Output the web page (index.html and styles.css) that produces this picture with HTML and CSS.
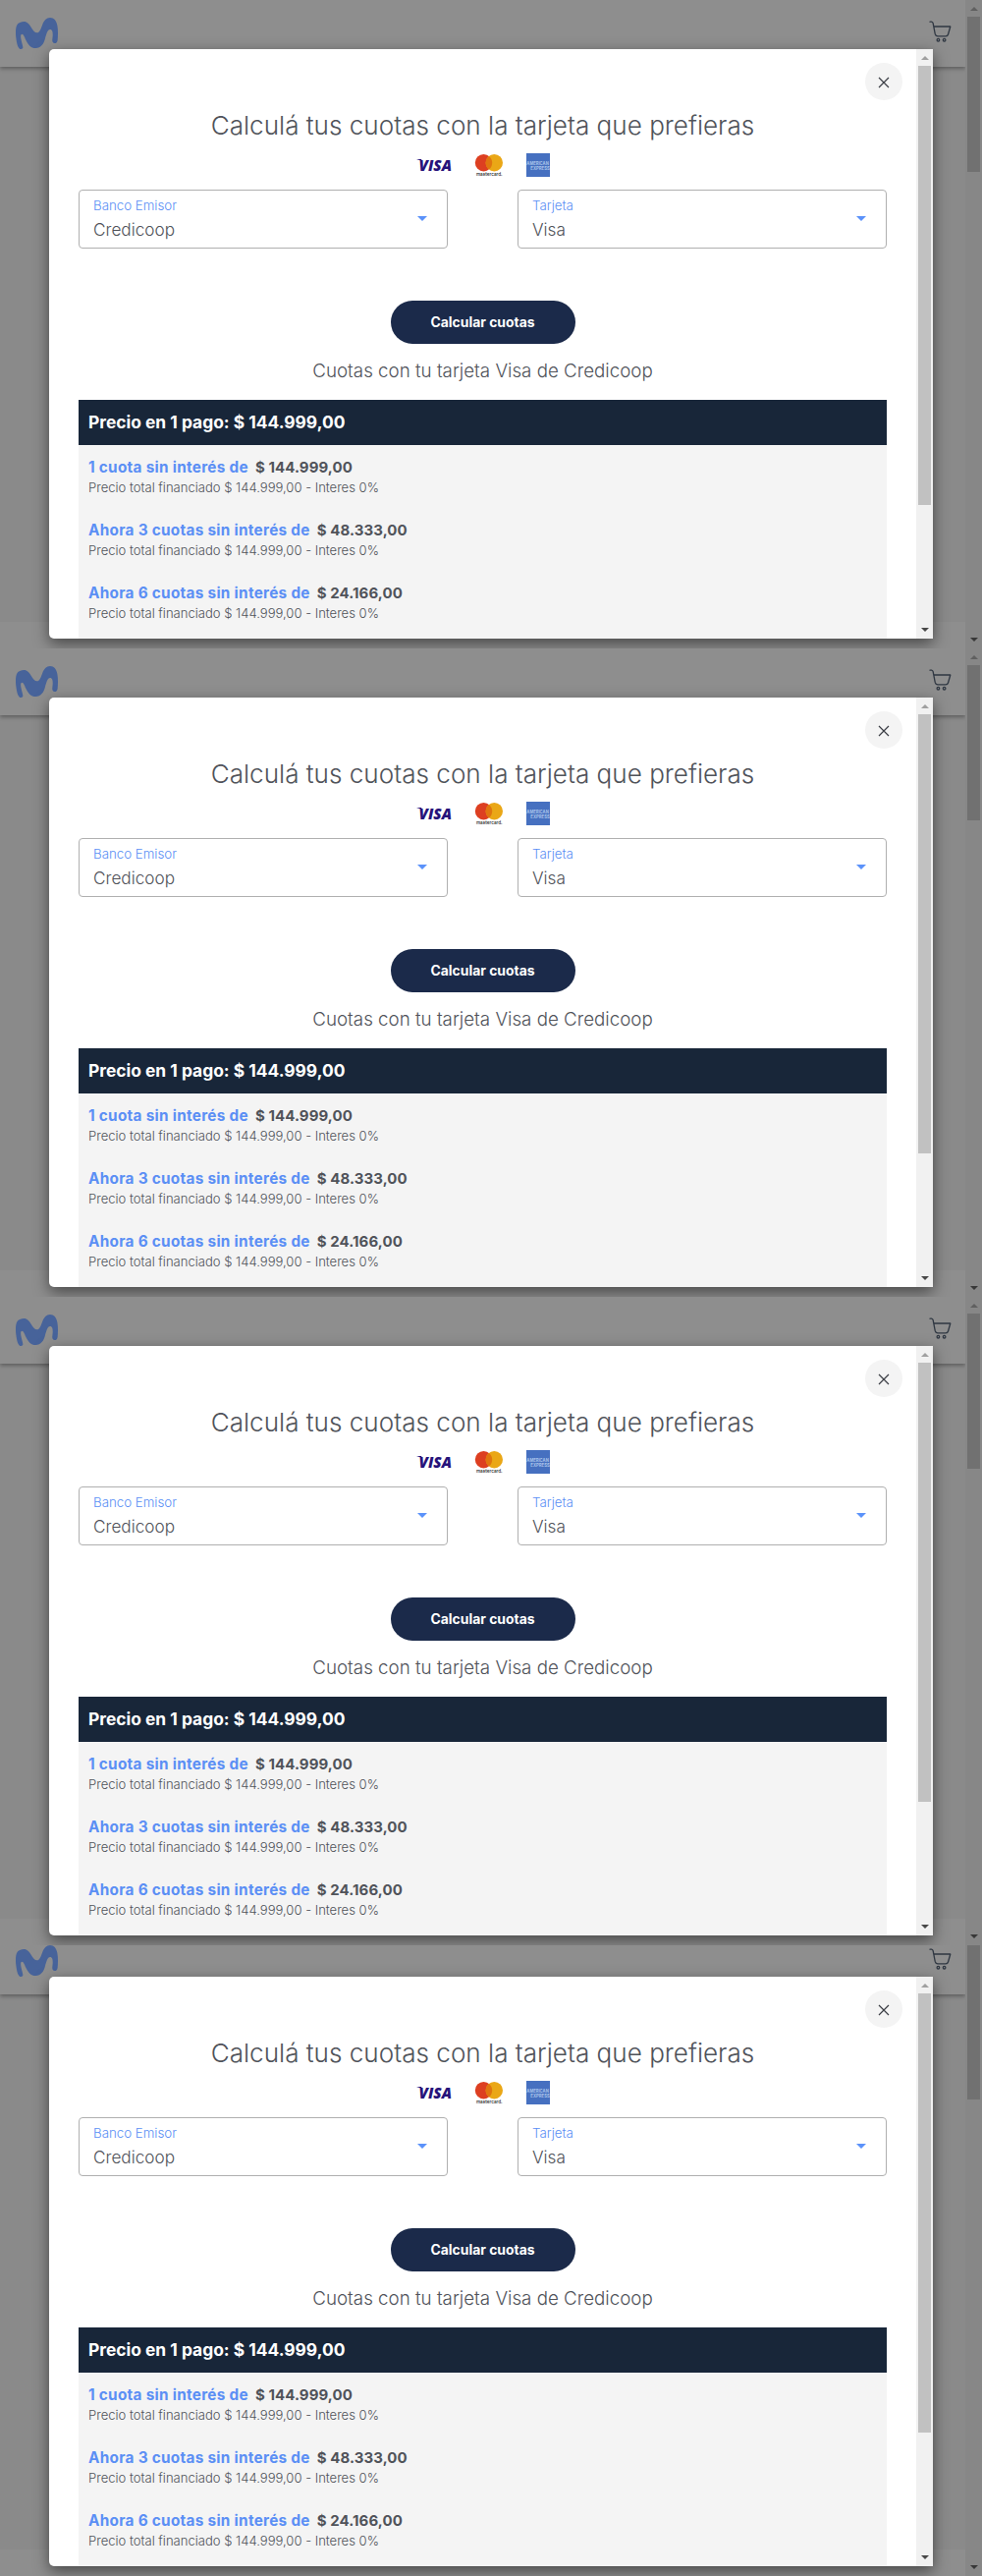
FILE: index.html
```
<!DOCTYPE html>
<html lang="es">
<head>
<meta charset="utf-8">
<title>Calculá tus cuotas</title>
<link rel="stylesheet" href="styles.css">
</head>
<body>
<svg class="defs" aria-hidden="true">
  <symbol id="logo" viewBox="48 54 129 96"><path d="M64 150C56 150 52 136 50 122C47 104 47 88 51 78C55 69 65 66 73 66C83 66 89 74 95 83C101 92 106 100 113 100C121 100 124 89 129 77C134 63 142 54 153 54C165 54 172 63 175 77C178 92 177 110 176 122C175 129 172 132 167 132C161 132 159 127 160 120C161 110 164 90 153 90C145 90 142 104 138 117C134 134 125 147 109 147C94 147 86 136 79 122C75 113 72 104 67 104C62 104 63 114 65 123C67 132 70 140 70 145C70 148 68 150 64 150Z"/></symbol>
  <symbol id="cart" viewBox="0 0 24 24"><g fill="none" stroke="currentColor" stroke-width="1.3" stroke-linecap="round" stroke-linejoin="round"><path d="M2 2.2H3.6Q4.8 2.4 5.2 3.8L7.2 14.4Q7.8 16.8 10 16.8H18Q20 16.8 20.5 15L22.8 7H6"/><circle cx="10.4" cy="20.7" r="1.3"/><circle cx="16.6" cy="20.7" r="1.3"/></g></symbol>
  <symbol id="cards" viewBox="0 0 136 24"><path fill="#26127a" d="M0 6H5L6 8Z"/><text x="2.5" y="18" class="visa" textLength="33.5" lengthAdjust="spacingAndGlyphs">VISA</text><circle cx="68.5" cy="9.7" r="8.7" fill="#dd3f21"/><circle cx="79.3" cy="9.7" r="8.7" fill="#eaa716"/><path fill="#e0760f" d="M73.9 2.9A8.7 8.7 0 0 1 73.9 16.5A8.7 8.7 0 0 1 73.9 2.9Z"/><text x="61" y="22.6" class="mc" textLength="26.5" lengthAdjust="spacingAndGlyphs">mastercard.</text><path fill="#4670c0" d="M112 0h24v24h-24z"/><text x="112.3" y="11.8" class="amex" textLength="22.5" lengthAdjust="spacingAndGlyphs">AMERICAN</text><text x="116.3" y="16.8" class="amex" textLength="19.5" lengthAdjust="spacingAndGlyphs">EXPRESS</text></symbol>
</svg>

<section class="screen">
  <div class="page">
    <div class="site"><header class="top"><svg class="logo"><use href="#logo"/></svg><svg class="cart"><use href="#cart"/></svg></header><footer class="foot"></footer></div>
    <div class="bar bar-page"><i class="up"></i><b class="thumb"></b><i class="down"></i></div>
  </div>
  <div class="modal">
    <div class="content">
      <button class="close" aria-label="Cerrar"><svg viewBox="0 0 12 12"><path d="M1 1L11 11M11 1L1 11"/></svg></button>
      <h1>Calculá tus cuotas con la tarjeta que prefieras</h1>
      <svg class="cards"><use href="#cards"/></svg>
      <div class="fields">
        <div class="field"><div><label>Banco Emisor</label><p>Credicoop</p></div><i class="caret"></i></div>
        <div class="field"><div><label>Tarjeta</label><p>Visa</p></div><i class="caret"></i></div>
      </div>
      <button class="calc">Calcular cuotas</button>
      <h2>Cuotas con tu tarjeta Visa de Credicoop</h2>
      <div class="price">Precio en 1 pago: $ 144.999,00</div>
      <ul class="plans">
        <li><p class="plan"><span class="name">1 cuota sin interés de</span><span class="sum">$ 144.999,00</span></p><p class="total">Precio total financiado $ 144.999,00 - Interes 0%</p></li>
        <li><p class="plan"><span class="name">Ahora 3 cuotas sin interés de</span><span class="sum">$ 48.333,00</span></p><p class="total">Precio total financiado $ 144.999,00 - Interes 0%</p></li>
        <li><p class="plan"><span class="name">Ahora 6 cuotas sin interés de</span><span class="sum">$ 24.166,00</span></p><p class="total">Precio total financiado $ 144.999,00 - Interes 0%</p></li>
      </ul>
    </div>
    <div class="bar bar-modal"><i class="up"></i><b class="thumb"></b><i class="down"></i></div>
  </div>
</section>

<section class="screen">
  <div class="page">
    <div class="site"><header class="top"><svg class="logo"><use href="#logo"/></svg><svg class="cart"><use href="#cart"/></svg></header><footer class="foot"></footer></div>
    <div class="bar bar-page"><i class="up"></i><b class="thumb"></b><i class="down"></i></div>
  </div>
  <div class="modal">
    <div class="content">
      <button class="close" aria-label="Cerrar"><svg viewBox="0 0 12 12"><path d="M1 1L11 11M11 1L1 11"/></svg></button>
      <h1>Calculá tus cuotas con la tarjeta que prefieras</h1>
      <svg class="cards"><use href="#cards"/></svg>
      <div class="fields">
        <div class="field"><div><label>Banco Emisor</label><p>Credicoop</p></div><i class="caret"></i></div>
        <div class="field"><div><label>Tarjeta</label><p>Visa</p></div><i class="caret"></i></div>
      </div>
      <button class="calc">Calcular cuotas</button>
      <h2>Cuotas con tu tarjeta Visa de Credicoop</h2>
      <div class="price">Precio en 1 pago: $ 144.999,00</div>
      <ul class="plans">
        <li><p class="plan"><span class="name">1 cuota sin interés de</span><span class="sum">$ 144.999,00</span></p><p class="total">Precio total financiado $ 144.999,00 - Interes 0%</p></li>
        <li><p class="plan"><span class="name">Ahora 3 cuotas sin interés de</span><span class="sum">$ 48.333,00</span></p><p class="total">Precio total financiado $ 144.999,00 - Interes 0%</p></li>
        <li><p class="plan"><span class="name">Ahora 6 cuotas sin interés de</span><span class="sum">$ 24.166,00</span></p><p class="total">Precio total financiado $ 144.999,00 - Interes 0%</p></li>
      </ul>
    </div>
    <div class="bar bar-modal"><i class="up"></i><b class="thumb"></b><i class="down"></i></div>
  </div>
</section>

<section class="screen">
  <div class="page">
    <div class="site"><header class="top"><svg class="logo"><use href="#logo"/></svg><svg class="cart"><use href="#cart"/></svg></header><footer class="foot"></footer></div>
    <div class="bar bar-page"><i class="up"></i><b class="thumb"></b><i class="down"></i></div>
  </div>
  <div class="modal">
    <div class="content">
      <button class="close" aria-label="Cerrar"><svg viewBox="0 0 12 12"><path d="M1 1L11 11M11 1L1 11"/></svg></button>
      <h1>Calculá tus cuotas con la tarjeta que prefieras</h1>
      <svg class="cards"><use href="#cards"/></svg>
      <div class="fields">
        <div class="field"><div><label>Banco Emisor</label><p>Credicoop</p></div><i class="caret"></i></div>
        <div class="field"><div><label>Tarjeta</label><p>Visa</p></div><i class="caret"></i></div>
      </div>
      <button class="calc">Calcular cuotas</button>
      <h2>Cuotas con tu tarjeta Visa de Credicoop</h2>
      <div class="price">Precio en 1 pago: $ 144.999,00</div>
      <ul class="plans">
        <li><p class="plan"><span class="name">1 cuota sin interés de</span><span class="sum">$ 144.999,00</span></p><p class="total">Precio total financiado $ 144.999,00 - Interes 0%</p></li>
        <li><p class="plan"><span class="name">Ahora 3 cuotas sin interés de</span><span class="sum">$ 48.333,00</span></p><p class="total">Precio total financiado $ 144.999,00 - Interes 0%</p></li>
        <li><p class="plan"><span class="name">Ahora 6 cuotas sin interés de</span><span class="sum">$ 24.166,00</span></p><p class="total">Precio total financiado $ 144.999,00 - Interes 0%</p></li>
      </ul>
    </div>
    <div class="bar bar-modal"><i class="up"></i><b class="thumb"></b><i class="down"></i></div>
  </div>
</section>

<section class="screen screen-last">
  <div class="page">
    <div class="site"><header class="top"><svg class="logo"><use href="#logo"/></svg><svg class="cart"><use href="#cart"/></svg></header><footer class="foot"></footer></div>
    <div class="bar bar-page"><i class="up"></i><b class="thumb"></b><i class="down"></i></div>
  </div>
  <div class="modal">
    <div class="content">
      <button class="close" aria-label="Cerrar"><svg viewBox="0 0 12 12"><path d="M1 1L11 11M11 1L1 11"/></svg></button>
      <h1>Calculá tus cuotas con la tarjeta que prefieras</h1>
      <svg class="cards"><use href="#cards"/></svg>
      <div class="fields">
        <div class="field"><div><label>Banco Emisor</label><p>Credicoop</p></div><i class="caret"></i></div>
        <div class="field"><div><label>Tarjeta</label><p>Visa</p></div><i class="caret"></i></div>
      </div>
      <button class="calc">Calcular cuotas</button>
      <h2>Cuotas con tu tarjeta Visa de Credicoop</h2>
      <div class="price">Precio en 1 pago: $ 144.999,00</div>
      <ul class="plans">
        <li><p class="plan"><span class="name">1 cuota sin interés de</span><span class="sum">$ 144.999,00</span></p><p class="total">Precio total financiado $ 144.999,00 - Interes 0%</p></li>
        <li><p class="plan"><span class="name">Ahora 3 cuotas sin interés de</span><span class="sum">$ 48.333,00</span></p><p class="total">Precio total financiado $ 144.999,00 - Interes 0%</p></li>
        <li><p class="plan"><span class="name">Ahora 6 cuotas sin interés de</span><span class="sum">$ 24.166,00</span></p><p class="total">Precio total financiado $ 144.999,00 - Interes 0%</p></li>
      </ul>
    </div>
    <div class="bar bar-modal"><i class="up"></i><b class="thumb"></b><i class="down"></i></div>
  </div>
</section>
</body>
</html>
```
FILE: styles.css
```
* { box-sizing: border-box; margin: 0; padding: 0; }
body { width: 1000px; font-family: Inter, "Liberation Sans", sans-serif; font-weight: 300; color: #50535a; background: #8a8a8a; }
svg { display: block; }
button { border: 0; font-family: inherit; }
.defs { display: none; }

/* One browser view: dimmed page below, dialog above */
.screen { display: grid; align-content: end; width: 1000px; height: 660px; overflow: hidden; }
.screen-last { height: 642px; }
.page, .modal { grid-area: 1 / 1; }
.page { display: flex; height: 660px; background: #8a8a8a; }
.site { flex: 1; display: flex; flex-direction: column; justify-content: space-between; }
.top { display: flex; justify-content: space-between; height: 68px; padding: 18px 14px 0 16px; background: #8e8e8e; box-shadow: 0 2px 4px rgba(0, 0, 0, .32); }
.logo { width: 43px; height: 32px; fill: #47639a; }
.cart { width: 24px; height: 24px; margin-top: 2px; color: #2f3742; }
.foot { height: 27px; background: #8e8e8e; }

.bar { display: flex; flex-direction: column; align-items: center; width: 17px; flex: none; background: #f1f1f1; }
.thumb { width: 13px; background: #c1c1c1; }
.up, .down { width: 0; height: 0; border: 4px solid transparent; border-width: 0 4px 4px; border-bottom-color: #a0a0a0; margin: 7px 0 6px; }
.down { border-width: 4px 4px 0; border-top-color: #484848; margin: auto 0 7px; }
.bar-page { background: #878787; }
.bar-page .thumb { height: 158px; background: #717171; }
.bar-page .up { border-bottom-color: #606060; }
.bar-page .down { border-top-color: #383838; }
.bar-modal .thumb { height: 447px; }

.modal { display: flex; position: relative; width: 900px; height: 600px; margin: 50px 50px 10px; background: #fff; border-radius: 5px 0 0 5px; box-shadow: 0 5px 15px rgba(0, 0, 0, .5); }
.content { flex: 1; display: flex; flex-direction: column; align-items: center; padding: 61px 30px 0; white-space: nowrap; }
.close { position: absolute; top: 14px; right: 31px; display: grid; place-items: center; width: 38px; height: 38px; border-radius: 50%; background: #f4f4f4; }
.close svg { width: 12px; height: 12px; margin-top: 1px; fill: none; stroke: #3a3d44; stroke-width: 1.2; }
h1 { height: 32px; line-height: 34px; font-size: 26.1px; font-weight: 300; }
.cards { width: 136px; height: 24px; margin: 13px 0 13px 1px; }
.visa { font: italic 800 16.5px "Open Sans", sans-serif; fill: #26127a; }
.mc { font: 500 5.4px Inter, sans-serif; fill: #222; }
.amex { font: 700 5px Inter, sans-serif; fill: #a9c3ea; }
.fields { display: grid; grid-template-columns: 376px 376px; justify-content: space-between; width: 100%; }
.field { display: flex; justify-content: space-between; height: 60px; padding: 7px 20px 0 14px; border: 1px solid #b0b0b0; border-radius: 4px; }
label { display: block; height: 18px; font-size: 13.3px; line-height: 16px; color: #5b8ff5; }
.field p { font-size: 17.2px; line-height: 30px; }
.caret { margin-top: 19px; border: 5px solid transparent; border-top-color: #5b92fa; border-bottom: 0; height: 0; }
.calc { width: 188px; height: 44px; margin-top: 53px; border-radius: 22px; background: #1b2a4a; color: #fff; font-size: 13.9px; font-weight: 700; }
h2 { height: 24px; margin: 15px 0 18px; font-size: 18.75px; line-height: 26px; font-weight: 300; }
.price { width: 100%; height: 46px; padding-left: 10px; background: #182639; color: #fff; font-size: 17.4px; font-weight: 700; line-height: 45px; }
.plans { display: flex; flex-direction: column; gap: 22px; flex: 1; width: 100%; padding: 12px 10px 0; background: #f4f4f4; list-style: none; }
.plan { display: flex; gap: 7px; height: 22px; font-size: 15.3px; font-weight: 700; line-height: 22px; letter-spacing: .3px; }
.name { color: #5b8ff5; }
.sum { font-size: 15px; letter-spacing: .08px; }
.total { height: 20px; font-size: 13.05px; line-height: 18px; }
```
